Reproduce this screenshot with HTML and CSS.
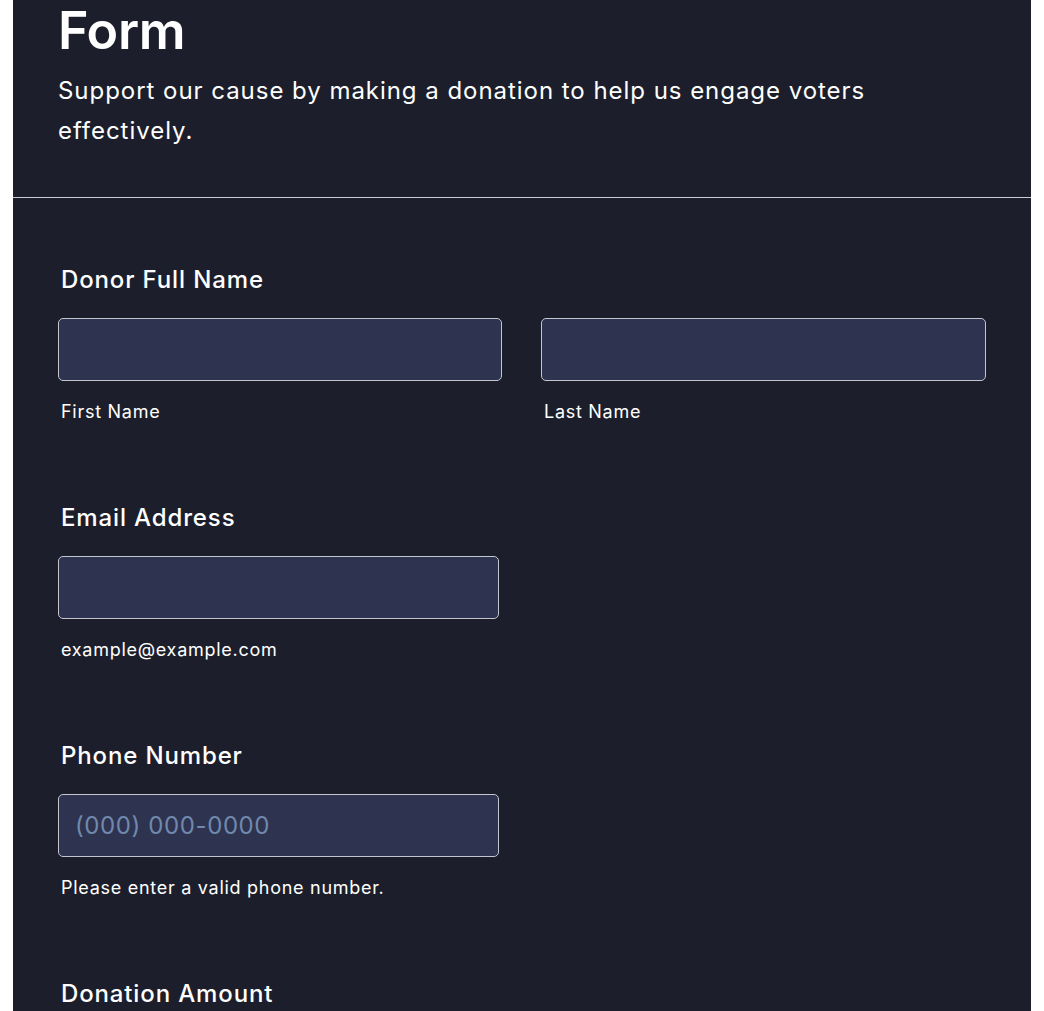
FILE: index.html
```html
<!DOCTYPE html>
<html>
<head>
<meta charset="utf-8">
<link rel="stylesheet" href="styles.css">
</head>
<body>
<div class="panel">
  <header class="header">
    <h1 class="title">Form</h1>
    <p class="subtitle">Support our cause by making a donation to help us engage voters effectively.</p>
  </header>
  <form class="form">
    <div class="field">
      <label class="label">Donor Full Name</label>
      <div class="row">
        <div class="col">
          <input class="input" type="text">
          <span class="sub">First Name</span>
        </div>
        <div class="col">
          <input class="input" type="text">
          <span class="sub">Last Name</span>
        </div>
      </div>
    </div>
    <div class="field">
      <label class="label">Email Address</label>
      <div class="col single">
        <input class="input" type="text">
        <span class="sub">example@example.com</span>
      </div>
    </div>
    <div class="field">
      <label class="label">Phone Number</label>
      <div class="col single">
        <input class="input" type="text" placeholder="(000) 000-0000">
        <span class="sub">Please enter a valid phone number.</span>
      </div>
    </div>
    <div class="field">
      <label class="label">Donation Amount</label>
    </div>
  </form>
</div>
</body>
</html>
```

FILE: styles.css
```css
html, body {
  margin: 0;
  padding: 0;
  background: #ffffff;
}
body {
  font-family: Inter, "Noto Sans", sans-serif;
  color: #ffffff;
}
.panel {
  margin-left: 13px;
  width: 1018px;
  min-height: 1011px;
  background: #1c1f2b;
}
.header {
  padding: 0 45px 46px 45px;
  border-bottom: 1px solid #c8cbd3;
}
.title {
  margin: 0;
  font-size: 52px;
  line-height: 62px;
  font-weight: 600;
  letter-spacing: -0.3px;
}
.subtitle {
  margin: 9px 0 0;
  font-size: 24px;
  line-height: 40px;
  font-weight: 400;
  letter-spacing: 0.04em;
  max-width: 928px;
}
.form {
  padding: 67px 45px 0 45px;
}
.field {
  margin-bottom: 79px;
}
.label {
  display: block;
  padding-left: 3px;
  font-size: 24px;
  line-height: 30px;
  font-weight: 500;
  letter-spacing: 0.036em;
  margin-bottom: 23px;
}
.row {
  display: grid;
  grid-template-columns: 444px 445px;
  column-gap: 39px;
}
.col {
  display: flex;
  flex-direction: column;
}
.single {
  width: 441px;
}
.input {
  box-sizing: border-box;
  height: 63px;
  width: 100%;
  margin: 0;
  background: #2e3350;
  border: 1px solid #c3c6cf;
  border-radius: 5px;
  padding: 0 16px;
  font-family: Inter, "Noto Sans", sans-serif;
  font-size: 24px;
  letter-spacing: 0.6px;
  color: #ffffff;
  outline: none;
}
.input::placeholder {
  color: #7089ad;
}
.sub {
  display: block;
  margin-top: 19px;
  padding-left: 3px;
  font-size: 18px;
  line-height: 24px;
  letter-spacing: 0.04em;
}
```
